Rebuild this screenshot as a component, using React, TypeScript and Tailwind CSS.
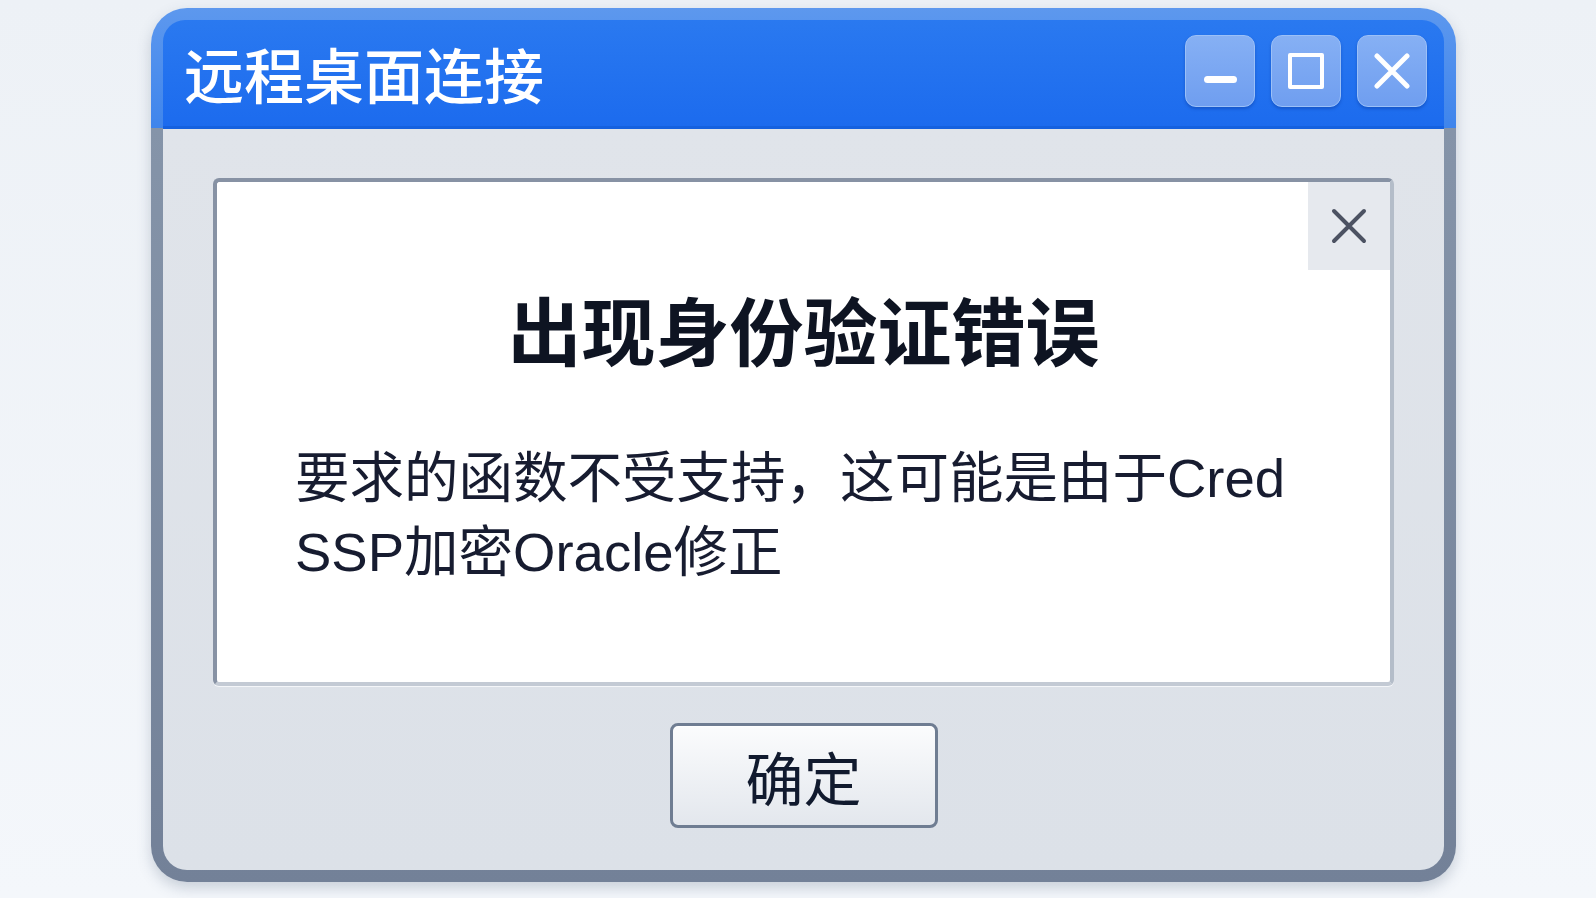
import React from "react";

const TitleButton = ({ children }: { children: React.ReactNode }) => (
  <div className="w-[70px] h-[72px] rounded-[11px] bg-[linear-gradient(180deg,#86b0f4,#6f9ef0)] border border-[#9cc0f7] shadow-[0_2px_3px_rgba(10,60,160,0.45)] flex items-center justify-center">
    {children}
  </div>
);

const App = () => {
  return (
    <div className="w-[1596px] h-[898px] overflow-hidden bg-[linear-gradient(180deg,#edf1f6,#f4f7fb)] pt-[8px] pl-[151px] font-['Liberation_Sans','Noto_Sans_CJK_SC',sans-serif]">
      <div className="w-[1305px] h-[874px] rounded-[36px] p-[12px] flex flex-col bg-[linear-gradient(180deg,#5d98ee_0px,#3f85ec_120px,#8594a9_120px,#738198_100%)] shadow-[0_6px_14px_rgba(70,90,120,0.25)]">
        {/* title bar */}
        <div className="h-[109px] shrink-0 rounded-t-[22px] bg-[linear-gradient(180deg,#2a79f0,#1c6bee)] border-b-[3px] border-[#1561df] flex items-center justify-between pl-[21px] pr-[17px]">
          <div className="text-white text-[60px] leading-none font-medium font-['Noto_Sans_CJK_SC',sans-serif] -mt-[1px]">
            远程桌面连接
          </div>
          <div className="flex gap-[16px] -mt-[4px]">
            <TitleButton>
              <div className="w-[33px] h-[7px] rounded-full bg-white mt-[16px]" />
            </TitleButton>
            <TitleButton>
              <div className="w-[36px] h-[36px] border-[4px] border-white rounded-[2px]" />
            </TitleButton>
            <TitleButton>
              <svg width="36" height="36" viewBox="0 0 36 36">
                <path d="M3 3 L33 33 M33 3 L3 33" stroke="#ffffff" strokeWidth="5" strokeLinecap="round" />
              </svg>
            </TitleButton>
          </div>
        </div>

        {/* body */}
        <div className="flex-1 rounded-b-[24px] bg-[linear-gradient(180deg,#e0e4ea,#dce1e8)] px-[50px] pt-[49px] pb-[41px] flex flex-col items-center">
          <div className="relative w-full h-[508px] bg-white rounded-[6px] border-[4px] border-t-[#8792a4] border-l-[#8792a4] border-r-[#b4bdc9] border-b-[#c3cad4] shadow-[0_1px_0_#f4f6f9]">
            <div className="absolute top-0 right-0 w-[82px] h-[88px] bg-[#e6e9ee] flex items-center justify-center">
              <svg width="36" height="36" viewBox="0 0 36 36">
                <path d="M3 3 L33 33 M33 3 L3 33" stroke="#4c5262" strokeWidth="4" strokeLinecap="round" />
              </svg>
            </div>
            <h1 className="mt-[109px] text-center text-[74px] leading-none font-bold text-[#0e1422] font-['Noto_Sans_CJK_SC',sans-serif]">
              出现身份验证错误
            </h1>
            <p className="mt-[77px] pl-[78px] text-[54.5px] leading-[74px] text-[#171c30]">
              要求的函数不受支持，这可能是由于Cred
              <br />
              SSP加密Oracle修正
            </p>
          </div>

          <button className="mt-[37px] w-[268px] h-[105px] shrink-0 rounded-[8px] border-[3px] border-[#6f7d92] bg-[linear-gradient(180deg,#fbfcfd,#e3e7ed)] shadow-[inset_0_1px_0_#ffffff] flex items-center justify-center text-[58px] leading-none text-[#111a2e] font-['Noto_Sans_CJK_SC',sans-serif]">
            确定
          </button>
        </div>
      </div>
    </div>
  );
};

export default App;
